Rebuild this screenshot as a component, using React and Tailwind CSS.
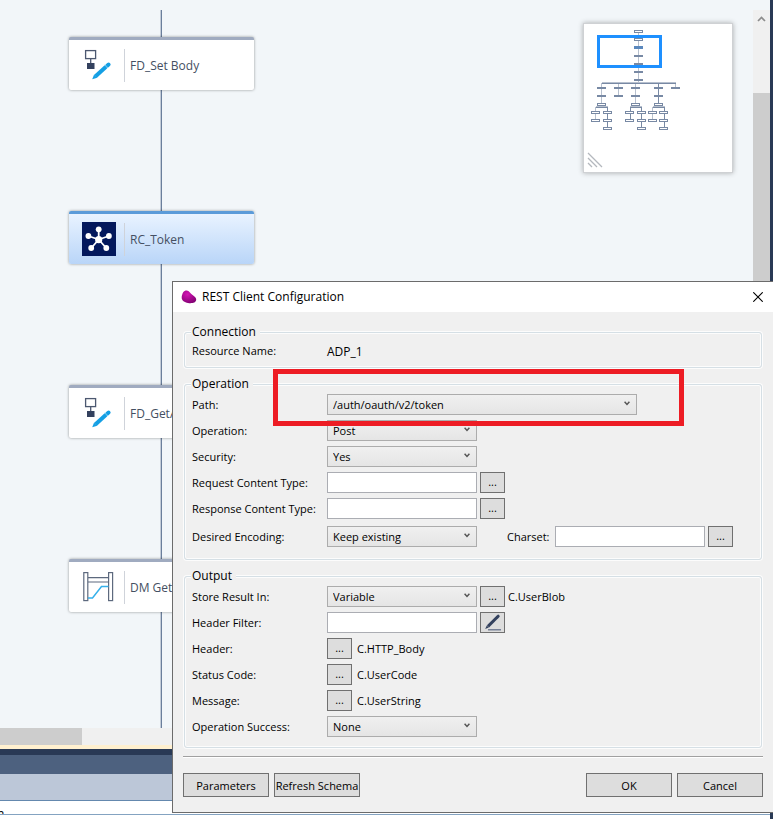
import { useState } from "react";

const nodes = [
  { id: 1, name: "FD_Set Body", icon: "edit", top: "top-[37px]" },
  { id: 2, name: "RC_Token", icon: "rest", top: "top-[211px]", selected: true },
  { id: 3, name: "FD_GetA", icon: "edit", top: "top-[385px]" },
  { id: 4, name: "DM Get", icon: "map", top: "top-[559px]" },
];

function NodeIcon({ type }) {
  if (type === "rest") {
    return (
      <svg width="34" height="34" viewBox="0 0 34 34" className="shrink-0">
        <rect width="34" height="34" fill="#03185c" />
        <g stroke="#fff" strokeWidth="1.8">
          <path d="M16.7 17.5V7.5M16.7 17.5L6.3 14M16.7 17.5L26.9 14M16.7 17.5L9.3 26M16.7 17.5L24.2 26" />
        </g>
        <g fill="#fff">
          <circle cx="16.7" cy="17.7" r="3.6" />
          <circle cx="16.7" cy="7.3" r="2.9" />
          <circle cx="6.4" cy="14" r="2.9" />
          <circle cx="26.9" cy="14" r="2.9" />
          <circle cx="9.2" cy="26" r="2.9" />
          <circle cx="24.3" cy="26" r="2.9" />
        </g>
      </svg>
    );
  }
  if (type === "map") {
    return (
      <svg width="34" height="34" viewBox="0 0 34 34" fill="none" className="shrink-0">
        <g stroke="#5d697e" strokeWidth="1.2">
          <rect x="1.8" y="2.6" width="4" height="28" />
          <rect x="26.6" y="2.6" width="4" height="28" />
          <path d="M6 7.6h20.5M6 12h20.5" />
        </g>
        <path d="M6 28h4.5L19.5 16.5h7" stroke="#35b0ea" strokeWidth="1.5" />
      </svg>
    );
  }
  return (
    <svg width="34" height="34" viewBox="0 0 34 34" fill="none" className="shrink-0">
      <rect x="3.6" y="2.6" width="10" height="8" stroke="#4c5870" strokeWidth="1.3" />
      <path d="M8.7 11v4" stroke="#4c5870" strokeWidth="1.3" />
      <rect x="5" y="15" width="7.5" height="6" fill="#33415e" />
      <path d="M13.6 28.2L24 18.8" stroke="#149fe4" strokeWidth="4" />
      <path d="M25.2 17.7L26.6 16.5" stroke="#149fe4" strokeWidth="4" strokeLinecap="round" />
      <path d="M10.2 31.2l1.9-4.8 3.2 3.4z" fill="#149fe4" />
      <path d="M23 16.6l3 3.4" stroke="#8fd2f5" strokeWidth="0.7" />
    </svg>
  );
}

function FlowNode({ node }) {
  return (
    <div
      className={`absolute left-[69px] flex h-[53px] w-[185px] items-center rounded-xs border-t-3 pl-[13px] shadow-[0_0_3px_rgba(0,0,0,0.4)] ${node.top} ${
        node.selected
          ? "border-[#5b9bd9] bg-linear-to-b from-[#e9f3ff] to-[#b9d5f8]"
          : "border-[#a0abc0] bg-white"
      }`}
    >
      <NodeIcon type={node.icon} />
      <div className="ml-2 h-[33px] w-px shrink-0 bg-[#cfd3da]" />
      <span className="ml-[5px] whitespace-nowrap pt-[2px] text-[12px] text-[#444f62]">{node.name}</span>
    </div>
  );
}

const closedBoxes = [
  [68.5, 56], [68.5, 64], [68.5, 72], [68.5, 80],
  [31.5, 88], [48.5, 88], [65.5, 88], [88.5, 88], [105.5, 88],
  [31.5, 96], [48.5, 96], [65.5, 96], [88.5, 96],
];

const openBoxes = [
  [68.5, 31.5], [68.5, 39.5],
  [31.5, 104.5], [65.5, 104.5], [88.5, 104.5],
  [26, 112.5], [37.5, 112.5], [60, 112.5], [71.5, 112.5], [83, 112.5], [94, 112.5],
  [26, 120.5], [37.5, 120.5], [60, 120.5], [71.5, 120.5], [83, 120.5], [94, 120.5],
  [37.5, 128.5], [71.5, 128.5], [94, 128.5],
];

function MiniMap() {
  return (
    <div className="absolute right-[20px] top-[23px] border border-[#cfd1d4] bg-white shadow-[0_0_5px_rgba(0,0,0,0.3)]">
      <svg width="148" height="148" viewBox="14 24 148 148" fill="none">
        <path
          d="M68.5 31V83M31.5 83V104M48.5 83V96M65.5 83V104M105.5 83V88M25.5 107V120M82.5 107V120"
          stroke="#b7c0ce"
        />
        <path d="M37.5 107V128M60.5 107V120M71.5 107V128M94.5 107V128M88.5 83V104" stroke="#7889a4" />
        <path d="M32 82.5h74M26 106.5h12M60 106.5h12M83 106.5h12" stroke="#b7c0ce" />
        <path d="M32 83.5h74M26 107.5h12M60 107.5h12M83 107.5h12" stroke="#7889a4" />
        {closedBoxes.map(([x, y]) => (
          <rect key={`${x}-${y}`} x={x - 4.5} y={y - 1} width="9" height="2" fill="#7889a4" />
        ))}
        {openBoxes.map(([x, y]) => (
          <rect key={`${x}-${y}`} x={Math.ceil(x) - 4.5} y={y - 1} width="8" height="2" fill="#fff" stroke="#7889a4" />
        ))}
        <rect x="64" y="46" width="9" height="3" fill="#5b88bd" />
        <rect x="28.5" y="36.5" width="62" height="30" stroke="#1e90ff" strokeWidth="3" />
        <path d="M18 153l14 14M18 158l9 9M18 163l4 4" stroke="#b4b8be" strokeWidth="1.3" />
      </svg>
    </div>
  );
}

function Group({ title, children }) {
  return (
    <fieldset className="relative rounded-[3px] border border-[#d5dfe5] px-[7px] shadow-[0_0_0_1px_#fcfcfc,inset_0_0_0_1px_#fcfcfc]">
      <legend className="-ml-px bg-[#f0f0f0] pl-px pr-1 text-[12px] leading-4">{title}</legend>
      {children}
    </fieldset>
  );
}

function Row({ label, htmlFor, children }) {
  return (
    <div className="flex h-[21px] items-center">
      <label htmlFor={htmlFor} className="w-[135px] shrink-0 whitespace-nowrap pt-[2px]">
        {label}
      </label>
      {children}
    </div>
  );
}

function Select({ id, options, wide }) {
  const [value, setValue] = useState(options[0]);
  return (
    <div className={`relative h-[21px] shrink-0 ${wide ? "w-[310px]" : "w-[150px]"}`}>
      <select
        id={id}
        value={value}
        onChange={(e) => setValue(e.target.value)}
        className="h-full w-full appearance-none border border-[#acacac] bg-linear-to-b from-[#f0f0f0] to-[#e5e5e5] pl-[5px] pt-[2px]"
      >
        {options.map((o) => (
          <option key={o}>{o}</option>
        ))}
      </select>
      <svg width="6" height="5" viewBox="0 0 6 5" fill="none" className="pointer-events-none absolute right-[7px] top-[7px]">
        <path d="M0.6 0.8L3 3.4L5.4 0.8" stroke="#555" strokeWidth="1.5" />
      </svg>
    </div>
  );
}

function TextBox({ id }) {
  return <input id={id} type="text" className="h-[21px] w-[150px] shrink-0 border border-[#abadb3] bg-white px-1" />;
}

function Button({ children, small, label, id }) {
  return (
    <button
      type="button"
      id={id}
      aria-label={label}
      className={`flex shrink-0 items-center justify-center whitespace-nowrap border border-[#707070] bg-[#dddddd] ${
        small ? "h-[21px] w-[25px]" : "h-6 w-[86px] pt-[2px]"
      }`}
    >
      {children}
    </button>
  );
}

function RestClientDialog() {
  return (
    <div
      role="dialog"
      aria-label="REST Client Configuration"
      className="absolute left-[172px] right-0 top-[281px] border-y border-l border-[#6b6b6b] bg-[#f0f0f0] text-[11px] text-black"
    >
      <div className="flex h-[30px] items-center bg-white pl-2 pr-[10px]">
        <svg width="16" height="14" viewBox="0 0 16 14">
          <defs>
            <radialGradient id="blob" cx="0.4" cy="0.3" r="0.8">
              <stop offset="0" stopColor="#d414b4" />
              <stop offset="1" stopColor="#7c006e" />
            </radialGradient>
          </defs>
          <path
            d="M4.6 0.6C6.8 0.1 8.2 1.6 9.6 3.2C11.4 5.1 15.4 6.8 15.2 9.8C15 13 10.4 13.6 7 13C3.6 12.5 0.6 10.8 0.7 7.6C0.8 5.2 2 1.2 4.6 0.6Z"
            fill="url(#blob)"
          />
        </svg>
        <h1 className="ml-[5px] text-[12px]">REST Client Configuration</h1>
        <button type="button" aria-label="Close" className="ml-auto">
          <svg width="10" height="10" viewBox="0 0 10 10">
            <path d="M0.3 0.3l9.4 9.4M9.7 0.3l-9.4 9.4" stroke="#000" strokeWidth="1.1" />
          </svg>
        </button>
      </div>

      <form className="px-[10px] pt-3" onSubmit={(e) => e.preventDefault()}>
        <div className="flex flex-col gap-2 px-px">
          <Group title="Connection">
            <div className="pb-[6px]">
              <Row label="Resource Name:" htmlFor="resource">
                <output id="resource" className="pt-[2px] text-[12px]">ADP_1</output>
              </Row>
            </div>
          </Group>

          <Group title="Operation">
            <div className="flex flex-col gap-[5px] pb-3 pt-[2px]">
              <Row label="Path:" htmlFor="path">
                <Select id="path" wide options={["/auth/oauth/v2/token"]} />
              </Row>
              <Row label="Operation:" htmlFor="operation">
                <Select id="operation" options={["Post", "Get", "Put", "Delete"]} />
              </Row>
              <Row label="Security:" htmlFor="security">
                <Select id="security" options={["Yes", "No"]} />
              </Row>
              <Row label="Request Content Type:" htmlFor="reqType">
                <div className="flex gap-[3px]">
                  <TextBox id="reqType" />
                  <Button small>...</Button>
                </div>
              </Row>
              <Row label="Response Content Type:" htmlFor="resType">
                <div className="flex gap-[3px]">
                  <TextBox id="resType" />
                  <Button small>...</Button>
                </div>
              </Row>
              <div className="pt-[2px]">
                <Row label="Desired Encoding:" htmlFor="encoding">
                  <Select id="encoding" options={["Keep existing"]} />
                  <label htmlFor="charset" className="ml-[30px] w-12 shrink-0 pt-[2px]">Charset:</label>
                  <div className="flex gap-[3px]">
                    <TextBox id="charset" />
                    <Button small>...</Button>
                  </div>
                </Row>
              </div>
            </div>
            {/* highlight around the path field */}
            <div className="pointer-events-none absolute left-[88px] top-[-23px] h-[57px] w-[411px] border-5 border-[#ed1c24]" />
          </Group>

          <Group title="Output">
            <div className="flex flex-col gap-[5px] pb-[10px] pt-[2px]">
              <Row label="Store Result In:" htmlFor="store">
                <div className="flex items-center gap-[3px]">
                  <Select id="store" options={["Variable"]} />
                  <Button small>...</Button>
                  <span className="pt-[2px]">C.UserBlob</span>
                </div>
              </Row>
              <Row label="Header Filter:" htmlFor="filter">
                <div className="flex gap-[3px]">
                  <TextBox id="filter" />
                  <Button small label="Edit">
                    <svg width="18" height="17" viewBox="0 0 18 17" fill="none">
                      <path d="M4 12.4L13.6 2.8" stroke="#33415e" strokeWidth="3" />
                      <path d="M13.6 2.8L14.2 2.2" stroke="#33415e" strokeWidth="3" strokeLinecap="round" />
                      <path d="M1.2 15l1.6-3.6 2 2z" fill="#33415e" />
                      <path d="M4 15.8h13" stroke="#5d6a86" strokeWidth="1.2" />
                    </svg>
                  </Button>
                </div>
              </Row>
              <Row label="Header:" htmlFor="header">
                <Button small id="header">...</Button>
                <span className="ml-[5px] pt-[2px]">C.HTTP_Body</span>
              </Row>
              <Row label="Status Code:" htmlFor="status">
                <Button small id="status">...</Button>
                <span className="ml-[5px] pt-[2px]">C.UserCode</span>
              </Row>
              <Row label="Message:" htmlFor="message">
                <Button small id="message">...</Button>
                <span className="ml-[5px] pt-[2px]">C.UserString</span>
              </Row>
              <Row label="Operation Success:" htmlFor="success">
                <Select id="success" options={["None"]} />
              </Row>
            </div>
          </Group>
        </div>

        <div className="mt-2 flex gap-[5px] border-t border-[#a0a0a0] pb-[15px] pt-4 shadow-[inset_0_1px_0_#ffffff]">
          <Button>Parameters</Button>
          <Button>Refresh Schema</Button>
          <div className="ml-auto flex gap-[5px]">
            <Button>OK</Button>
            <Button>Cancel</Button>
          </div>
        </div>
      </form>
    </div>
  );
}

export default function App() {
  return (
    <div className="relative flex min-h-screen overflow-hidden bg-[#293955] font-['Open_Sans','Noto_Sans',sans-serif]">
      <div className="flex grow flex-col">
        <div className="flex grow bg-[#f2f6f9]">
          <div className="relative grow">
            <div className="absolute bottom-0 left-[160px] top-[10px] w-[2px] border-l border-[#c3ccd8] bg-[#6b7f9c]" />
            {nodes.map((n) => (
              <FlowNode key={n.id} node={n} />
            ))}
            <MiniMap />
          </div>
          {/* vertical scrollbar */}
          <div className="mt-[10px] flex w-[17px] flex-col bg-[#f0f0f0]">
            <div className="flex h-[83px] justify-center pt-[6px]">
              <svg width="9" height="6" viewBox="0 0 9 6" fill="none">
                <path d="M1 5L4.5 1.4L8 5" stroke="#8c8c8c" strokeWidth="1.7" />
              </svg>
            </div>
            <div className="grow bg-[#cdcdcd]" />
          </div>
        </div>
        {/* horizontal scrollbar */}
        <div className="h-[17px] bg-[#f0f0f0]">
          <div className="h-full w-[82px] bg-[#cdcdcd]" />
        </div>
        <div className="h-1 bg-[#fff0cf]" />
        <div className="h-[6px] bg-[#293955]" />
        <div className="h-[19px] bg-[#4d617f]" />
        <div className="h-[27px] border-b border-[#6488ae] bg-[#bcc7d8]" />
        <div className="h-[14px] overflow-hidden border-b border-[#84a3c1] bg-white">
          <span className="-ml-[3px] block pt-[5px] text-[12px] leading-4">n</span>
        </div>
        <div className="h-1 bg-white" />
      </div>
      <div className="w-[3px] shrink-0" />
      <RestClientDialog />
    </div>
  );
}
